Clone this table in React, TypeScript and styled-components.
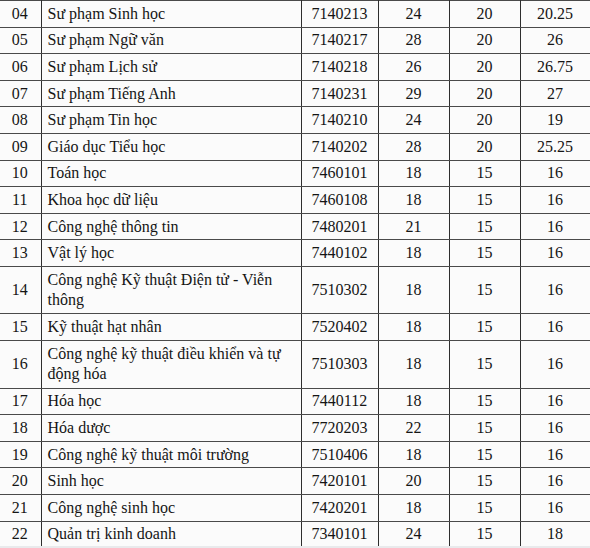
import React from 'react'
import styled, { createGlobalStyle } from 'styled-components'

const GlobalStyle = createGlobalStyle`
  html, body {
    margin: 0;
    padding: 0;
    background: #e9eaec;
  }
  body {
    width: 590px;
    height: 548px;
    overflow: hidden;
  }
`

const Sheet = styled.div`
  width: 590px;
  height: 546px;
  overflow: hidden;
  background: #fbfbfb;
`

const Table = styled.table`
  border-collapse: collapse;
  table-layout: fixed;
  width: 591px;
  margin-left: -1px;
  font-family: "Liberation Serif", "Times New Roman", serif;
  font-size: 16px;
  color: #151515;
`

const Row = styled.tr<{ $tall?: boolean }>`
  height: ${(p) => (p.$tall ? '47.5px' : '26.6px')};
`

const Cell = styled.td<{ $align?: 'left' | 'center' }>`
  padding: 0 ${(p) => (p.$align === 'left' ? '6px' : '0')};
  text-align: ${(p) => p.$align ?? 'center'};
  vertical-align: middle;
  line-height: 20px;
  border-top: 1.5px solid #4a4a4a;
  border-bottom: 1.5px solid #4a4a4a;
  border-left: 1.5px solid #2e2e2e;
  border-right: 1.5px solid #2e2e2e;
  white-space: nowrap;
  overflow: hidden;

  &:first-child {
    border-left: none;
  }
  &:last-child {
    border-right: 1px solid #bbb;
  }
`

type Major = {
  no: string
  name: string[]
  code: string
  a: string
  b: string
  c: string
}

const majors: Major[] = [
  { no: '04', name: ['Sư phạm Sinh học'], code: '7140213', a: '24', b: '20', c: '20.25' },
  { no: '05', name: ['Sư phạm Ngữ văn'], code: '7140217', a: '28', b: '20', c: '26' },
  { no: '06', name: ['Sư phạm Lịch sử'], code: '7140218', a: '26', b: '20', c: '26.75' },
  { no: '07', name: ['Sư phạm Tiếng Anh'], code: '7140231', a: '29', b: '20', c: '27' },
  { no: '08', name: ['Sư phạm Tin học'], code: '7140210', a: '24', b: '20', c: '19' },
  { no: '09', name: ['Giáo dục Tiểu học'], code: '7140202', a: '28', b: '20', c: '25.25' },
  { no: '10', name: ['Toán học'], code: '7460101', a: '18', b: '15', c: '16' },
  { no: '11', name: ['Khoa học dữ liệu'], code: '7460108', a: '18', b: '15', c: '16' },
  { no: '12', name: ['Công nghệ thông tin'], code: '7480201', a: '21', b: '15', c: '16' },
  { no: '13', name: ['Vật lý học'], code: '7440102', a: '18', b: '15', c: '16' },
  { no: '14', name: ['Công nghệ Kỹ thuật Điện tử - Viễn', 'thông'], code: '7510302', a: '18', b: '15', c: '16' },
  { no: '15', name: ['Kỹ thuật hạt nhân'], code: '7520402', a: '18', b: '15', c: '16' },
  { no: '16', name: ['Công nghệ kỹ thuật điều khiển và tự', 'động hóa'], code: '7510303', a: '18', b: '15', c: '16' },
  { no: '17', name: ['Hóa học'], code: '7440112', a: '18', b: '15', c: '16' },
  { no: '18', name: ['Hóa dược'], code: '7720203', a: '22', b: '15', c: '16' },
  { no: '19', name: ['Công nghệ kỹ thuật môi trường'], code: '7510406', a: '18', b: '15', c: '16' },
  { no: '20', name: ['Sinh học'], code: '7420101', a: '20', b: '15', c: '16' },
  { no: '21', name: ['Công nghệ sinh học'], code: '7420201', a: '18', b: '15', c: '16' },
  { no: '22', name: ['Quản trị kinh doanh'], code: '7340101', a: '24', b: '15', c: '18' },
]

const widths = [42, 260, 77, 71, 71, 70]

export default function App() {
  return (
    <Sheet>
      <GlobalStyle />
      <Table>
        <colgroup>
          {widths.map((w, i) => (
            <col key={i} style={{ width: w }} />
          ))}
        </colgroup>
        <tbody>
          {majors.map((m) => (
            <Row key={m.no} $tall={m.name.length > 1}>
              <Cell>{m.no}</Cell>
              <Cell $align="left">
                {m.name.map((line, i) => (
                  <React.Fragment key={i}>
                    {i > 0 && <br />}
                    {line}
                  </React.Fragment>
                ))}
              </Cell>
              <Cell>{m.code}</Cell>
              <Cell>{m.a}</Cell>
              <Cell>{m.b}</Cell>
              <Cell>{m.c}</Cell>
            </Row>
          ))}
        </tbody>
      </Table>
    </Sheet>
  )
}
